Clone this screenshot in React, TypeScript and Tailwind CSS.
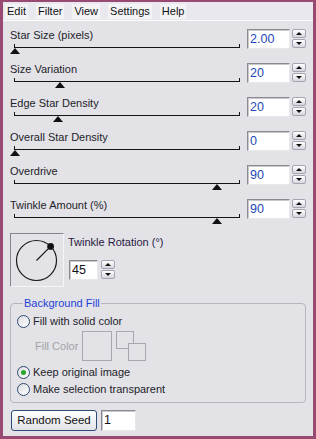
import React from 'react';

const rows = [
  { label: 'Star Size (pixels)', value: '2.00', pos: 0 },
  { label: 'Size Variation', value: '20', pos: 0.2 },
  { label: 'Edge Star Density', value: '20', pos: 0.19 },
  { label: 'Overall Star Density', value: '0', pos: 0 },
  { label: 'Overdrive', value: '90', pos: 0.9 },
  { label: 'Twinkle Amount (%)', value: '90', pos: 0.9 },
];

function SpinButton({ up }: { up?: boolean }) {
  return (
    <div className="flex h-[9px] items-center justify-center rounded-[2px] border border-[#a4a4b2] bg-gradient-to-b from-white to-[#d6d6de]">
      {up ? (
        <div className="h-0 w-0 border-x-[3px] border-b-[3px] border-x-transparent border-b-[#111]" />
      ) : (
        <div className="h-0 w-0 border-x-[3px] border-t-[3px] border-x-transparent border-t-[#111]" />
      )}
    </div>
  );
}

function Spinner() {
  return (
    <div className="flex w-[14px] flex-col gap-px">
      <SpinButton up />
      <SpinButton />
    </div>
  );
}

function ValueBox({ value, width, blue }: { value: string; width: string; blue?: boolean }) {
  return (
    <div
      className={`flex h-[20px] items-center border border-[#8a8a90] border-b-[#e8e8ec] border-r-[#e8e8ec] bg-white pl-[2px] text-[12.5px] shadow-[inset_1px_1px_0_#c8c8cc] ${width} ${
        blue ? 'text-[#1d46b8]' : 'text-[#111]'
      }`}
    >
      {value}
    </div>
  );
}

function SliderRow({ label, value, pos }: { label: string; value: string; pos: number }) {
  return (
    <div className="flex h-[34px]">
      <div className="w-[230px]">
        <div className="h-[16px] leading-[14px] text-[#1e1e2a]">{label}</div>
        <div className="relative ml-[4px] h-[4px] border-x border-b border-[#141414]">
          <div
            className="absolute top-full mt-px h-0 w-0 -translate-x-1/2 border-x-[5px] border-b-[6px] border-x-transparent border-b-[#111]"
            style={{ left: `${pos * 100}%` }}
          />
        </div>
      </div>
      <div className="ml-[7px] mt-px flex items-start gap-[2px]">
        <ValueBox value={value} width="w-[43px]" blue />
        <Spinner />
      </div>
    </div>
  );
}

function Radio({ checked, label }: { checked?: boolean; label: string }) {
  return (
    <div className="flex h-[14px] items-center gap-[3px]">
      <div className="flex h-[13px] w-[13px] items-center justify-center rounded-full border border-[#2f4a72] bg-gradient-to-br from-[#dcdce2] to-white">
        {checked && <div className="h-[5px] w-[5px] rounded-full bg-[#26a82c]" />}
      </div>
      <span className="leading-[14px] text-[#1e1e2a]">{label}</span>
    </div>
  );
}

export default function App() {
  return (
    <div className="flex h-[439px] w-[316px] flex-col border-x-[3px] border-b-[3px] border-t-2 border-[#984a72] font-['Liberation_Sans',Arial,sans-serif] text-[11px]">
      <div className="flex flex-1 flex-col bg-[#e2e2e7]">
        {/* menu */}
        <div className="flex h-[18px] items-center gap-[8px] bg-[#e8e8ee] pl-[2px]">
          {['Edit', 'Filter', 'View', 'Settings', 'Help'].map((m) => (
            <span key={m} className="bg-[#f3f3f6] px-[2px] leading-[15px] text-[#111]">
              {m}
            </span>
          ))}
        </div>
        <div className="h-px bg-[#fbfbfd]" />

        <div className="flex flex-col pl-[7px] pr-[7px] pt-[7px]">
          {rows.map((r) => (
            <SliderRow key={r.label} {...r} />
          ))}

          {/* twinkle rotation */}
          <div className="mt-px flex gap-[4px]">
            <div className="h-[54px] w-[54px] border border-[#858590] border-b-[#f4f4f6] border-r-[#f4f4f6]">
              <svg width="52" height="52" viewBox="0 0 52 52">
                <circle cx="25.5" cy="26.5" r="20" fill="none" stroke="#1a1a1a" strokeWidth="1.2" />
                <line x1="25.5" y1="26.5" x2="39.6" y2="12.4" stroke="#1a1a1a" strokeWidth="1.2" />
                <circle cx="39.6" cy="12.4" r="3.4" fill="#111" />
              </svg>
            </div>
            <div className="flex flex-col">
              <div className="mt-[2px] leading-[14px] text-[#2a1a40]">Twinkle Rotation (°)</div>
              <div className="ml-px mt-[11px] flex items-start gap-[3px]">
                <ValueBox value="45" width="w-[29px]" />
                <Spinner />
              </div>
            </div>
          </div>

          {/* background fill */}
          <fieldset className="mt-[9px] h-[107px] rounded-[4px] border border-[#b6b6c0] px-[6px]">
            <legend className="ml-[6px] px-[1px] leading-[14px] text-[#1f3fd6]">Background Fill</legend>
            <div className="pt-[4px]">
              <Radio label="Fill with solid color" />
              <div className="mt-[3px] flex h-[30px] items-center">
                <span className="ml-[18px] w-[47px] leading-[14px] text-[#a2a2a8]">Fill Color</span>
                <div className="h-[30px] w-[30px] border border-[#a8a8b0]" />
                <svg width="32" height="30" viewBox="0 0 32 30" className="ml-[4px]">
                  <rect x="0.5" y="0.5" width="17" height="17" fill="none" stroke="#a8a8b0" />
                  <rect x="12.5" y="12.5" width="17" height="17" fill="#e2e2e7" stroke="#a8a8b0" />
                </svg>
              </div>
              <div className="mt-[4px]">
                <Radio checked label="Keep original image" />
              </div>
              <div className="mt-[3px]">
                <Radio label="Make selection transparent" />
              </div>
            </div>
          </fieldset>

          {/* seed */}
          <div className="mt-[7px] flex gap-[4px] pl-px">
            <button className="h-[21px] w-[86px] rounded-[3px] border border-[#2d4a78] bg-gradient-to-b from-white to-[#e2e2e8] text-[11.5px] text-[#111]">
              Random Seed
            </button>
            <ValueBox value="1" width="w-[35px] h-[21px]" />
          </div>
        </div>
      </div>
    </div>
  );
}
